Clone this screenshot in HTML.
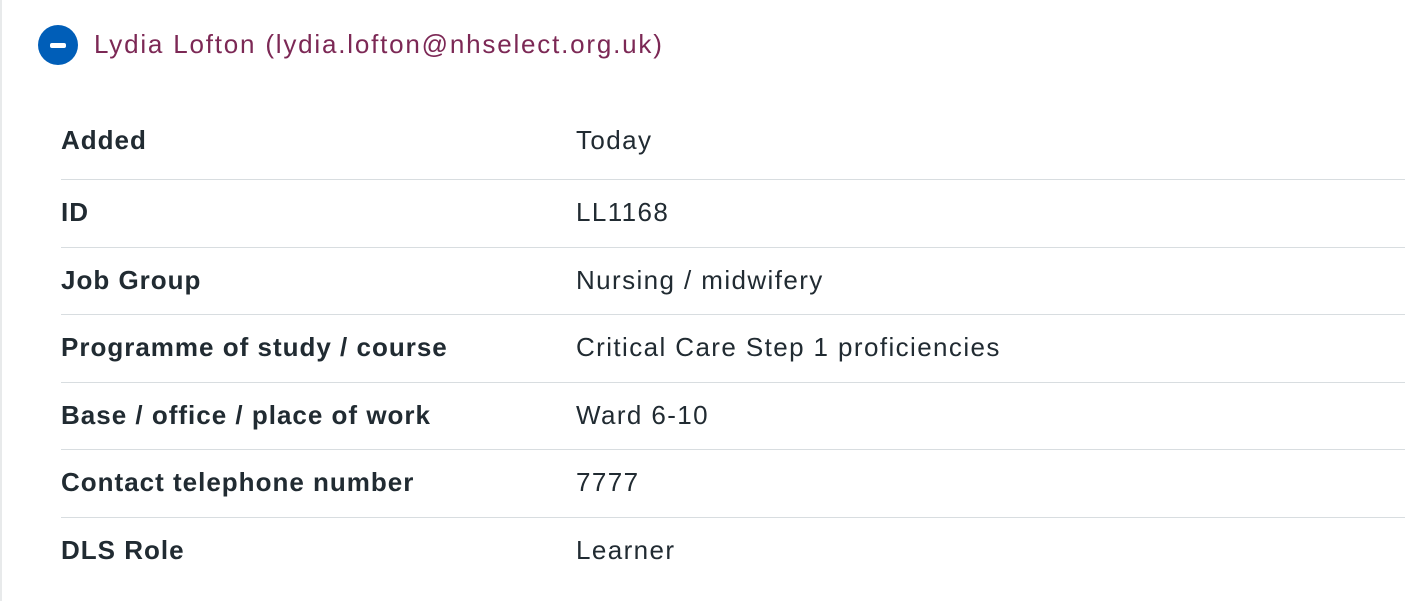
<!DOCTYPE html>
<html><head><meta charset="utf-8"><style>
html,body{margin:0;padding:0;width:1418px;height:601px;background:#fff;overflow:hidden;font-family:"Liberation Sans",sans-serif;}
.bl{position:absolute;left:0;top:0;width:2px;height:601px;background:#e8eaeb;}
.h{position:absolute;left:94px;top:28px;font-size:26px;line-height:32px;color:#7c2855;letter-spacing:1.8px;white-space:nowrap;}
.ic{position:absolute;left:38px;top:25px;width:40px;height:40px;border-radius:50%;background:#005eb8;}
.ic:after{content:"";position:absolute;left:12px;top:17.5px;width:16px;height:5px;border-radius:2px;background:#fff;}
.row{position:absolute;left:61px;width:1344px;height:40px;font-size:26px;line-height:40px;color:#212b32;white-space:nowrap;}
.row b{position:absolute;left:0;letter-spacing:1.0px;}
.row span{position:absolute;left:515px;letter-spacing:1.4px;}
.ln{position:absolute;left:61px;width:1344px;height:1px;background:#d8dde0;}
</style></head><body>
<div class="bl"></div>
<div class="ic"></div>
<div class="h">Lydia Lofton (lydia.lofton@nhselect.org.uk)</div>
<div class="row" style="top:120px"><b>Added</b><span>Today</span></div>
<div class="ln" style="top:179px"></div>
<div class="row" style="top:192px"><b>ID</b><span>LL1168</span></div>
<div class="ln" style="top:247px"></div>
<div class="row" style="top:260px"><b>Job Group</b><span>Nursing / midwifery</span></div>
<div class="ln" style="top:314px"></div>
<div class="row" style="top:327px"><b>Programme of study / course</b><span>Critical Care Step 1 proficiencies</span></div>
<div class="ln" style="top:382px"></div>
<div class="row" style="top:395px"><b>Base / office / place of work</b><span>Ward 6-10</span></div>
<div class="ln" style="top:449px"></div>
<div class="row" style="top:462px"><b>Contact telephone number</b><span>7777</span></div>
<div class="ln" style="top:517px"></div>
<div class="row" style="top:530px"><b>DLS Role</b><span>Learner</span></div>
</body></html>
